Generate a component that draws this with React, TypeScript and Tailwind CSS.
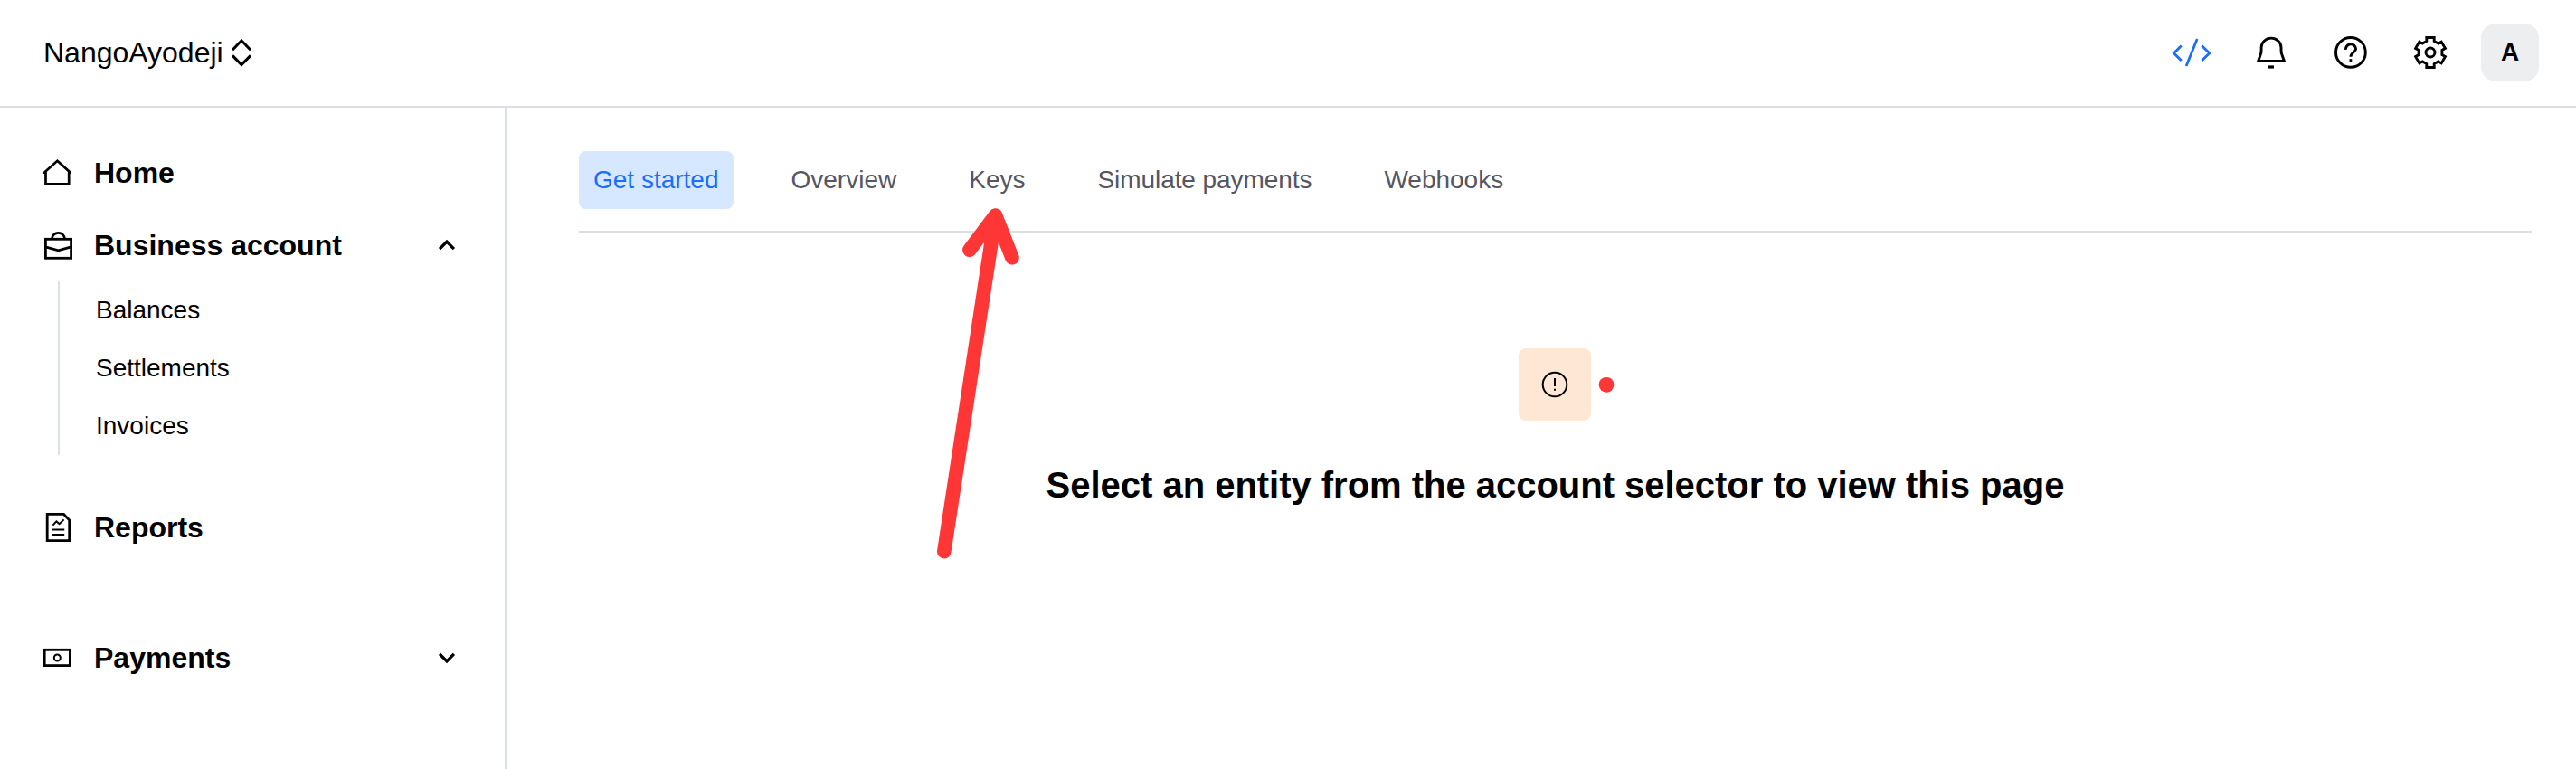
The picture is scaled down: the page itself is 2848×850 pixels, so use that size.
import React from "react";

type IconProps = { className?: string };

const gearPath = (() => {
  const tooth = [
    [-4.2, -12.5],
    [-4.2, -16.5],
    [4.2, -16.5],
    [4.2, -12.5],
  ];
  const points: string[] = [];
  for (let k = 0; k < 6; k++) {
    const a = (k * Math.PI) / 3;
    for (const [x, y] of tooth) {
      const px = 24 + x * Math.cos(a) - y * Math.sin(a);
      const py = 24 + x * Math.sin(a) + y * Math.cos(a);
      points.push(`${px.toFixed(2)} ${py.toFixed(2)}`);
    }
  }
  return `M${points.join("L")}Z`;
})();

const CodeIcon = () => (
  <svg className="size-12 text-[#1a6dff]" viewBox="0 0 48 48" fill="none" stroke="currentColor" strokeWidth="2.8">
    <path d="M12.7 16.4L4.4 24.7L12.7 33.1M30.2 8.9L18.1 38.9M35.3 16.4L43.8 24.7L35.3 33.1" />
  </svg>
);

const BellIcon = () => (
  <svg className="size-12" viewBox="-4 -4 48 48" fill="none" stroke="currentColor" strokeWidth="2.9">
    <path d="M5.7 29.5L8 23Q9.1 20.5 9.1 17.5V14.6A10.95 10.5 0 0 1 31 14.6V17.5Q31 20.5 32.1 23L34.4 29.5Z" />
    <path d="M17 36H23" strokeWidth="3.2" />
  </svg>
);

const HelpIcon = () => (
  <svg className="size-12" viewBox="0 0 48 48" fill="none" stroke="currentColor" strokeWidth="2.9">
    <circle cx="23.9" cy="23.9" r="16.4" />
    <path d="M18.4 20.8a5.6 5.6 0 0 1 11.2 -.8c0 3.8-5.7 4-5.7 8.7" />
    <rect x="22.5" y="31.2" width="2.8" height="2.8" fill="currentColor" stroke="none" />
  </svg>
);

const GearIcon = () => (
  <svg className="size-12" viewBox="0 0 48 48" fill="none" stroke="currentColor" strokeWidth="2.9">
    <path d={gearPath} />
    <circle cx="24" cy="24" r="5" />
  </svg>
);

const SelectorIcon = () => (
  <svg className="h-8 w-6" viewBox="0 0 24 32" fill="none" stroke="currentColor" strokeWidth="3">
    <path d="M2 13.2L12 2.8L22 13.2M2 19.4L12 29.6L22 19.4" />
  </svg>
);

const HomeIcon = () => (
  <svg className="size-8" viewBox="0 0 32 32" fill="none" stroke="currentColor" strokeWidth="2.7">
    <path d="M1.2 17V15.4L15.4 2.8L29.4 15.4V17" />
    <path d="M2.5 15V28.4H28.2V15" />
  </svg>
);

const BriefcaseIcon = () => (
  <svg className="size-8" viewBox="0 0 32 32" fill="none" stroke="currentColor" strokeWidth="2.8">
    <rect x="2.4" y="9.3" width="28.2" height="21" />
    <path d="M9.4 9.4A7.1 7.1 0 0 1 23.6 9.4M2.3 17.8L16.5 21.8L30.6 17.8" />
  </svg>
);

const ReportIcon = () => (
  <svg className="size-8" viewBox="0 0 32 32" fill="none" stroke="currentColor" strokeWidth="2.8">
    <path d="M4.2 1.3H22.4L28.7 8V30.6H4.2Z" />
    <path d="M10.4 13.6L14.4 9.4L17.6 12.2L22.6 7.4M9.8 18.6H23.2M9.8 24H23.2" strokeWidth="2" />
  </svg>
);

const BanknoteIcon = () => (
  <svg className="size-8" viewBox="0 0 32 32" fill="none" stroke="currentColor" strokeWidth="2.8">
    <rect x="1.2" y="7.3" width="28.2" height="17.3" />
    <circle cx="15.3" cy="16" r="3.5" strokeWidth="2" />
  </svg>
);

const Chevron = ({ className = "" }: IconProps) => (
  <svg className={`size-5 ${className}`} viewBox="0 0 20 20" fill="none" stroke="currentColor" strokeWidth="3.3">
    <path d="M2.1 14.2L10 6.1L17.9 14.2" />
  </svg>
);

const AlertIcon = () => (
  <svg className="size-8" viewBox="0 0 32 32" fill="none" stroke="currentColor" strokeWidth="2">
    <circle cx="16" cy="16" r="13.3" />
    <path d="M16 9V18M16 20.7V22.7" />
  </svg>
);

type NavRowProps = {
  icon: React.ReactNode;
  label: string;
  trailing?: React.ReactNode;
  className?: string;
};

const NavRow = ({ icon, label, trailing, className = "" }: NavRowProps) => (
  <a className={`flex h-20 items-center pl-12 pr-[54px] text-[32px] leading-10 font-bold ${className}`}>
    {icon}
    <span className="ml-6 flex-1">{label}</span>
    {trailing}
  </a>
);

const tabs = [
  { label: "Get started", style: "bg-[#d6e8ff] text-[#1a6dff]" },
  { label: "Overview", style: "text-[#545662]" },
  { label: "Keys", style: "text-[#545662]" },
  { label: "Simulate payments", style: "text-[#545662] tracking-[-0.07px]" },
  { label: "Webhooks", style: "text-[#545662]" },
];
const accountLinks = ["Balances", "Settlements", "Invoices"];

export default function App() {
  return (
    <div className="relative flex h-[850px] w-[2848px] flex-col overflow-hidden bg-white font-['Liberation_Sans',Arial,sans-serif] text-black">
      <header className="flex h-[119px] shrink-0 items-center justify-between border-b-2 border-[#dce0e5] pr-[41px] pb-px pl-12">
        <button className="flex items-center gap-2 text-[32px] leading-10">
          <span>NangoAyodeji</span>
          <SelectorIcon />
        </button>
        <div className="flex items-center">
          <div className="flex items-center gap-10">
            <CodeIcon />
            <BellIcon />
            <HelpIcon />
            <GearIcon />
          </div>
          <div className="ml-8 flex size-16 items-center justify-center rounded-2xl bg-[#edeef0] text-[28px] leading-8 font-bold">
            A
          </div>
        </div>
      </header>

      <div className="flex flex-1">
        <nav className="w-[560px] shrink-0 border-r-2 border-[#dce0e5] pt-8">
          <NavRow icon={<HomeIcon />} label="Home" />
          <NavRow icon={<BriefcaseIcon />} label="Business account" trailing={<Chevron />} />
          <ul className="ml-16 border-l-2 border-[#dce0e5] pl-10">
            {accountLinks.map((link) => (
              <li key={link} className="flex h-16 items-center text-[28px] leading-10">
                {link}
              </li>
            ))}
          </ul>
          <NavRow className="mt-10" icon={<ReportIcon />} label="Reports" />
          <NavRow className="mt-16" icon={<BanknoteIcon />} label="Payments" trailing={<Chevron className="rotate-180" />} />
        </nav>

        <main className="flex flex-1 flex-col pt-12 pr-[49px] pl-20">
          <div className="flex gap-12 border-b-2 border-[#dce0e5] pb-6">
            {tabs.map(({ label, style }) => (
              <button key={label} className={`flex h-16 items-center rounded-lg px-4 text-[28px] leading-10 ${style}`}>
                {label}
              </button>
            ))}
          </div>
          <section className="mt-32 flex flex-col items-center">
            <div className="mr-px flex size-20 items-center justify-center rounded-lg bg-[#ffe7d6]">
              <AlertIcon />
            </div>
            <h1 className="mt-[47px] text-[40px] leading-12 font-bold tracking-[-0.02px]">
              Select an entity from the account selector to view this page
            </h1>
          </section>
        </main>
      </div>

      <svg
        className="pointer-events-none absolute top-[220px] left-[1020px] h-[410px] w-[780px]"
        viewBox="1020 220 780 410"
        fill="none"
        stroke="#ff3636"
        strokeWidth="15.6"
        strokeLinecap="round"
        strokeLinejoin="round"
      >
        <path d="M1043.8 609.6L1100.6 238M1071.9 276.2L1100.6 238L1119 284.8" />
        <circle cx="1776" cy="425.3" r="8.4" fill="#ff3636" stroke="none" />
      </svg>
    </div>
  );
}
